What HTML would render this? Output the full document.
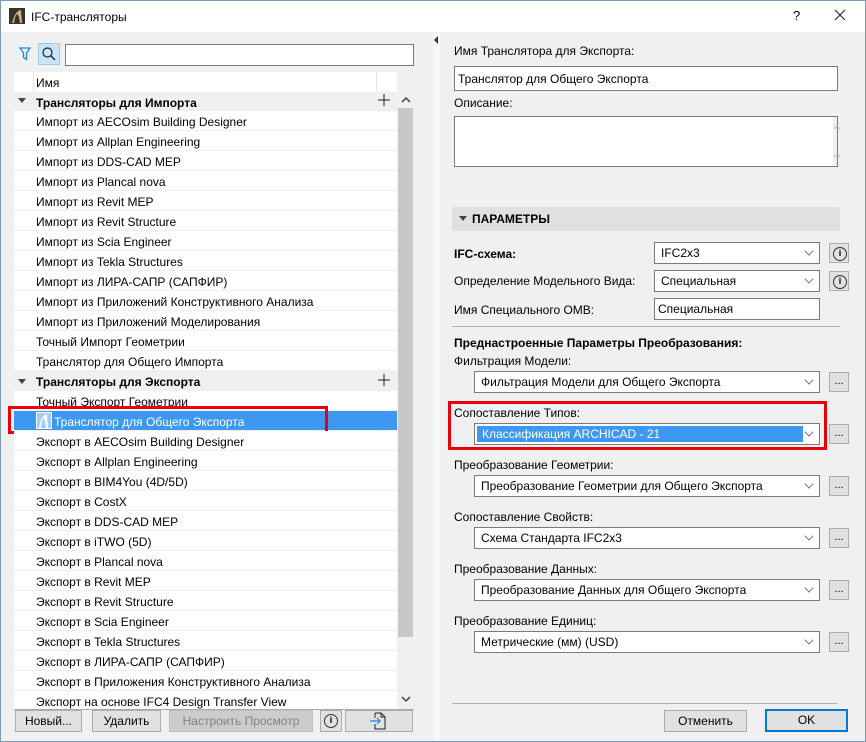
<!DOCTYPE html>
<html><head><meta charset="utf-8"><style>
*{box-sizing:border-box;margin:0;padding:0}
body{width:866px;height:742px;overflow:hidden;font-family:"Liberation Sans","Noto Sans CJK SC",sans-serif;font-size:12px;color:#000;background:#f0f0f0;position:relative}
.a{position:absolute}
.win{left:0;top:0;width:866px;height:742px;border:1px solid #7a98b8;background:#f0f0f0}
.title{left:1px;top:1px;width:864px;height:31px;background:#fff}
.row{position:absolute;left:14px;width:383px;height:20px;background:#fff;border-bottom:1px solid #f0f0f0;padding-left:22px;padding-top:2px;line-height:19px;white-space:nowrap}
.grp{background:#f0f0f0;font-weight:bold;border:none}
.sel{position:absolute;background:#fff;border:1px solid #7a7a7a;height:22px;line-height:21px;padding-left:6px;white-space:nowrap}
.sel .dd{position:absolute;right:6px;width:8px;height:8px;border-right:1px solid #555;border-bottom:1px solid #555;transform:rotate(45deg) scale(.8);top:4px}
.btn{position:absolute;background:#e1e1e1;border:1px solid #adadad;height:22px;line-height:21px;text-align:center}
.sm{position:absolute;background:#e1e1e1;border:1px solid #adadad;width:20px;height:20px;text-align:center;line-height:17px;font-size:11px}
.info{position:absolute;width:20px;height:20px;background:#e1e1e1;border:1px solid #adadad}
.info:after{content:"i";position:absolute;left:3px;top:3px;width:12px;height:12px;border:1px solid #333;border-radius:50%;font-size:9px;line-height:11px;text-align:center;font-weight:bold}
.lbl{position:absolute;white-space:nowrap}
</style></head><body>
<div class="a win"></div>
<div class="a title"></div>
<svg class="a" style="left:9px;top:8px" width="16" height="16"><rect width="16" height="16" fill="#3a3228"/><path d="M3 15 Q6 3 12 2 L13 15 L11 15 Q10 7 8 6 Q6 8 5 15Z" fill="#c9b58f"/></svg>
<div class="lbl" style="left:31px;top:10px;font-size:12px">IFC-трансляторы</div>
<div class="lbl" style="left:793px;top:8px;font-size:13px">?</div>
<svg class="a" style="left:834px;top:9px" width="12" height="12"><path d="M1 1L11 11M11 1L1 11" stroke="#222" stroke-width="1.1"/></svg>
<div class="a" style="left:433px;top:33px;width:7px;height:708px;background:#f7f7f7"></div>
<div class="a" style="left:434px;top:36px;width:0;height:0;border-top:4px solid transparent;border-bottom:4px solid transparent;border-right:4px solid #333"></div>

<svg class="a" style="left:19px;top:47px" width="12" height="14"><path d="M1 1H11L7.5 6V12.5L4.5 10.5V6Z" fill="none" stroke="#1e88e5" stroke-width="1.3"/></svg>
<div class="a" style="left:38px;top:43px;width:22px;height:22px;background:#cce4f7;border:1px solid #99c9ef"></div>
<svg class="a" style="left:41px;top:46px" width="16" height="16"><circle cx="6.5" cy="6.5" r="4.5" fill="none" stroke="#222" stroke-width="1.2"/><path d="M10 10L14 14" stroke="#222" stroke-width="1.4"/></svg>
<div class="a" style="left:65px;top:44px;width:349px;height:22px;background:#fff;border:1px solid #7a7a7a"></div>

<div class="a" style="left:14px;top:72px;width:383px;height:638px;background:#fff"></div>
<div class="row" style="top:72px;background:#fff;border-bottom:none">Имя</div>
<div class="a" style="left:33px;top:72px;width:1px;height:20px;background:#e5e5e5"></div>
<div class="a" style="left:376px;top:72px;width:1px;height:20px;background:#e5e5e5"></div>
<div class="row grp" style="top:92px;height:19px">Трансляторы для Импорта</div>
<div class="lbl" style="left:18px;top:98px;border-left:4px solid transparent;border-right:4px solid transparent;border-top:5px solid #444"></div>
<svg class="a" style="left:378px;top:94px" width="12" height="12"><path d="M6 0V12M0 6H12" stroke="#222"/></svg>
<div class="row" style="top:111px">Импорт из AECOsim Building Designer</div>
<div class="row" style="top:131px">Импорт из Allplan Engineering</div>
<div class="row" style="top:151px">Импорт из DDS-CAD MEP</div>
<div class="row" style="top:171px">Импорт из Plancal nova</div>
<div class="row" style="top:191px">Импорт из Revit MEP</div>
<div class="row" style="top:211px">Импорт из Revit Structure</div>
<div class="row" style="top:231px">Импорт из Scia Engineer</div>
<div class="row" style="top:251px">Импорт из Tekla Structures</div>
<div class="row" style="top:271px">Импорт из ЛИРА-САПР (САПФИР)</div>
<div class="row" style="top:291px">Импорт из Приложений Конструктивного Анализа</div>
<div class="row" style="top:311px">Импорт из Приложений Моделирования</div>
<div class="row" style="top:331px">Точный Импорт Геометрии</div>
<div class="row" style="top:351px">Транслятор для Общего Импорта</div>
<div class="row grp" style="top:371px">Трансляторы для Экспорта</div>
<div class="lbl" style="left:18px;top:379px;border-left:4px solid transparent;border-right:4px solid transparent;border-top:5px solid #444"></div>
<svg class="a" style="left:378px;top:374px" width="12" height="12"><path d="M6 0V12M0 6H12" stroke="#222"/></svg>
<div class="row" style="top:391px">Точный Экспорт Геометрии</div>
<div class="row" style="top:411px;background:#3c98f0;color:#fff;padding-left:40px">Транслятор для Общего Экспорта</div>
<svg class="a" style="left:36px;top:412px" width="16" height="17"><rect x="0.5" y="0.5" width="15" height="16" fill="#9fcdf7" stroke="#fff"/><path d="M3 16Q5 3 11 2L12 16H10Q9 7 7.5 6Q6 8 5 16Z" fill="#fff"/></svg>
<div class="a" style="left:8px;top:406px;width:320px;height:28px;border:3px solid #e8000b"></div>
<div class="row" style="top:431px">Экспорт в AECOsim Building Designer</div>
<div class="row" style="top:451px">Экспорт в Allplan Engineering</div>
<div class="row" style="top:471px">Экспорт в BIM4You (4D/5D)</div>
<div class="row" style="top:491px">Экспорт в CostX</div>
<div class="row" style="top:511px">Экспорт в DDS-CAD MEP</div>
<div class="row" style="top:531px">Экспорт в iTWO (5D)</div>
<div class="row" style="top:551px">Экспорт в Plancal nova</div>
<div class="row" style="top:571px">Экспорт в Revit MEP</div>
<div class="row" style="top:591px">Экспорт в Revit Structure</div>
<div class="row" style="top:611px">Экспорт в Scia Engineer</div>
<div class="row" style="top:631px">Экспорт в Tekla Structures</div>
<div class="row" style="top:651px">Экспорт в ЛИРА-САПР (САПФИР)</div>
<div class="row" style="top:671px">Экспорт в Приложения Конструктивного Анализа</div>
<div class="row" style="top:691px;height:19px;border:none">Экспорт на основе IFC4 Design Transfer View</div>
<div class="a" style="left:397px;top:92px;width:17px;height:618px;background:#f0f0f0"></div>
<div class="a" style="left:398px;top:108px;width:15px;height:529px;background:#c8c8c8"></div>
<svg class="a" style="left:401px;top:96px" width="10" height="8"><path d="M1 6L5 2L9 6" fill="none" stroke="#555" stroke-width="1.6"/></svg>
<svg class="a" style="left:401px;top:695px" width="10" height="8"><path d="M1 2L5 6L9 2" fill="none" stroke="#555" stroke-width="1.6"/></svg>
<div class="a" style="left:14px;top:709px;width:400px;height:1px;background:#aaa"></div>
<div class="btn" style="left:15px;top:710px;width:67px">Новый...</div>
<div class="btn" style="left:92px;top:710px;width:69px">Удалить</div>
<div class="btn" style="left:169px;top:710px;width:144px;background:#cccccc;border-color:#bfbfbf;color:#838383">Настроить Просмотр</div>
<div class="info" style="left:320px;top:710px;width:22px;height:22px"></div>
<div class="btn" style="left:345px;top:710px;width:68px"></div>
<svg class="a" style="left:369px;top:711px" width="18" height="20"><path d="M6 2H12L16 6V18H6V13M6 7V2" fill="none" stroke="#222"/><path d="M12 2V6H16" fill="none" stroke="#222"/><path d="M1 10H11M8 7L11 10L8 13" fill="none" stroke="#1e88e5" stroke-width="1.2"/></svg>

<div class="lbl" style="left:454px;top:44px">Имя Транслятора для Экспорта:</div>
<div class="sel" style="left:454px;top:66px;width:384px;height:25px;line-height:24px;padding-left:3px">Транслятор для Общего Экспорта</div>
<div class="lbl" style="left:454px;top:96px">Описание:</div>
<div class="a" style="left:454px;top:116px;width:384px;height:51px;background:#fff;border:1px solid #7a7a7a"></div>
<div class="a" style="left:833px;top:117px;width:4px;height:49px;background:#f0f0f0"></div>
<svg class="a" style="left:832px;top:124px" width="10" height="36"><path d="M2 5L5 2L8 5M2 31L5 34L8 31" fill="none" stroke="#bbb"/></svg>
<div class="a" style="left:452px;top:207px;width:388px;height:24px;background:#e0e0e0;border-radius:2px"></div>
<div class="lbl" style="left:459px;top:216px;border-left:4px solid transparent;border-right:4px solid transparent;border-top:5px solid #444"></div>
<div class="lbl" style="left:472px;top:212px;font-weight:bold">ПАРАМЕТРЫ</div>

<div class="lbl" style="left:454px;top:247px;font-weight:bold">IFC-схема:</div>
<div class="sel" style="left:654px;top:242px;width:166px">IFC2x3<span class="dd"></span></div>
<div class="info" style="left:829px;top:243px"></div>
<div class="lbl" style="left:454px;top:274px">Определение Модельного Вида:</div>
<div class="sel" style="left:654px;top:270px;width:166px">Специальная<span class="dd"></span></div>
<div class="info" style="left:829px;top:271px"></div>
<div class="lbl" style="left:454px;top:303px">Имя Специального ОМВ:</div>
<div class="sel" style="left:654px;top:298px;width:166px;padding-left:3px">Специальная</div>
<div class="a" style="left:452px;top:326px;width:388px;height:1px;background:#b0b0b0"></div>
<div class="lbl" style="left:454px;top:336px;font-weight:bold">Преднастроенные Параметры Преобразования:</div>

<div class="lbl" style="left:454px;top:354px">Фильтрация Модели:</div>
<div class="sel" style="left:474px;top:371px;width:346px">Фильтрация Модели для Общего Экспорта<span class="dd"></span></div>
<div class="sm" style="left:829px;top:372px">...</div>

<div class="a" style="left:448px;top:401px;width:379px;height:49px;border:3px solid #e8000b"></div>
<div class="lbl" style="left:454px;top:406px">Сопоставление Типов:</div>
<div class="sel" style="left:474px;top:423px;width:346px;padding:2px"><div style="background:#3c98f0;color:#fff;width:326px;height:16px;line-height:17px;padding-left:5px">Классификация ARCHICAD - 21</div><span class="dd"></span></div>
<div class="sm" style="left:829px;top:424px">...</div>

<div class="lbl" style="left:454px;top:458px">Преобразование Геометрии:</div>
<div class="sel" style="left:474px;top:475px;width:346px">Преобразование Геометрии для Общего Экспорта<span class="dd"></span></div>
<div class="sm" style="left:829px;top:476px">...</div>

<div class="lbl" style="left:454px;top:510px">Сопоставление Свойств:</div>
<div class="sel" style="left:474px;top:527px;width:346px">Схема Стандарта IFC2x3<span class="dd"></span></div>
<div class="sm" style="left:829px;top:528px">...</div>

<div class="lbl" style="left:454px;top:562px">Преобразование Данных:</div>
<div class="sel" style="left:474px;top:579px;width:346px">Преобразование Данных для Общего Экспорта<span class="dd"></span></div>
<div class="sm" style="left:829px;top:580px">...</div>

<div class="lbl" style="left:454px;top:614px">Преобразование Единиц:</div>
<div class="sel" style="left:474px;top:631px;width:346px">Метрические (мм) (USD)<span class="dd"></span></div>
<div class="sm" style="left:829px;top:632px">...</div>

<div class="a" style="left:452px;top:703px;width:385px;height:1px;background:#b0b0b0"></div>
<div class="btn" style="left:664px;top:710px;width:83px">Отменить</div>
<div class="btn" style="left:765px;top:709px;width:83px;height:23px;border:2px solid #0078d7;line-height:19px">OK</div>
</body></html>
